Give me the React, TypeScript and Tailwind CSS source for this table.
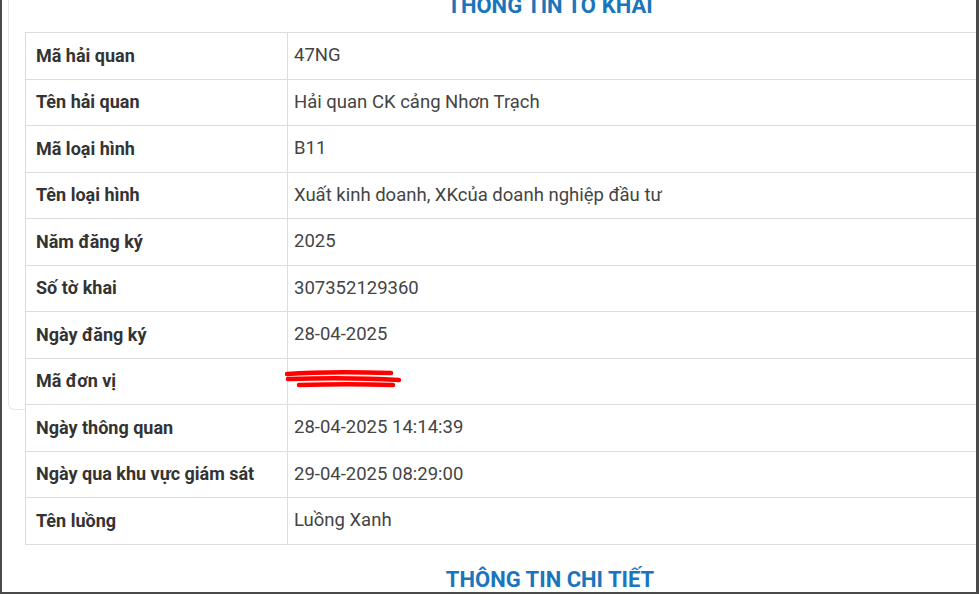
const rows: [string, string][] = [
  ['Mã hải quan', '47NG'],
  ['Tên hải quan', 'Hải quan CK cảng Nhơn Trạch'],
  ['Mã loại hình', 'B11'],
  ['Tên loại hình', 'Xuất kinh doanh, XKcủa doanh nghiệp đầu tư'],
  ['Năm đăng ký', '2025'],
  ['Số tờ khai', '307352129360'],
  ['Ngày đăng ký', '28-04-2025'],
  ['Mã đơn vị', ''],
  ['Ngày thông quan', '28-04-2025 14:14:39'],
  ['Ngày qua khu vực giám sát', '29-04-2025 08:29:00'],
  ['Tên luồng', 'Luồng Xanh'],
];

function Redacted() {
  return (
    <svg width="120" height="20" viewBox="0 0 120 20" className="block">
      <path d="M2 4 C30 2 70 2 106 3" stroke="#ff0000" strokeWidth="4.5" fill="none" strokeLinecap="round" />
      <path d="M3 9 C40 8 80 8 114 10" stroke="#ff0000" strokeWidth="4.5" fill="none" strokeLinecap="round" />
      <path d="M14 15 C45 14 80 14 108 15" stroke="#ff0000" strokeWidth="4.5" fill="none" strokeLinecap="round" />
    </svg>
  );
}

export default function App() {
  return (
    <div
      className="relative h-[594px] w-[979px] overflow-hidden border-b-2 border-l-2 border-r-[3px] border-[#4a4a4a] bg-white"
      style={{ fontFamily: 'Roboto, "Noto Sans", sans-serif' }}
    >
      {/* faint panel behind */}
      <div className="absolute left-[6px] top-[-10px] h-[420px] w-[40px] rounded-bl-md border-b border-l border-[#e6e6e6]" />

      <div className="relative ml-[23px] w-[1050px]">
        <h2 className="mt-[-7px] h-[39px] text-center text-[22px] font-bold leading-[26px] text-[#1b75bc]">
          THÔNG TIN TỜ KHAI
        </h2>
        <table className="w-full border-collapse bg-white text-[18px] text-[#333]">
          <tbody>
            {rows.map(([k, v]) => (
              <tr key={k} className="h-[46.5px]">
                <td className="w-[262px] border border-[#ddd] px-[10px] align-middle font-bold text-[#333]">
                  <div className="-mt-[1px]">{k}</div>
                </td>
                <td className="border border-[#ddd] px-[6px] align-middle text-[18.5px] text-[#444]">
                  {v ? <div className="mt-[1px]">{v}</div> : <div className="-ml-[9px] -mt-[2px]"><Redacted /></div>}
                </td>
              </tr>
            ))}
          </tbody>
        </table>
        <h2 className="mt-[22px] text-center text-[22px] font-bold leading-[26px] text-[#1b75bc]">
          THÔNG TIN CHI TIẾT
        </h2>
      </div>
    </div>
  );
}
